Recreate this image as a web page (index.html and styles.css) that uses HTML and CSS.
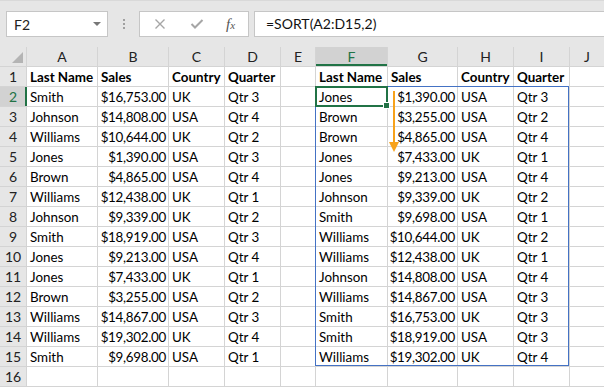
FILE: index.html
```html
<!DOCTYPE html>
<html>
<head>
<meta charset="utf-8">
<link rel="stylesheet" href="styles.css">
</head>
<body>
<div class="toolbar">
  <div class="namebox"><span class="ref">F2</span><span class="dd"></span></div>
  <div class="grip"><i></i><i></i><i></i></div>
  <div class="btnbox">
    <svg class="ico" width="12" height="12" viewBox="0 0 12 12"><path d="M1.5 1.5 L10.5 10.5 M10.5 1.5 L1.5 10.5" stroke="#a6a6a6" stroke-width="1.4" fill="none"/></svg>
    <svg class="ico" width="14" height="12" viewBox="0 0 14 12"><path d="M1.5 6 L5 9.5 L12.5 2" stroke="#a6a6a6" stroke-width="2" fill="none"/></svg>
    <span class="fx">f<sub>x</sub></span>
  </div>
  <div class="formula">=SORT(A2:D15,2)</div>
</div>
<div class="sheet">
  <div class="grid">
    <div class="hd corner"><span class="tri"></span></div>
    <div class="hd">A</div><div class="hd">B</div><div class="hd">C</div><div class="hd">D</div><div class="hd">E</div>
    <div class="hd sel-col">F</div><div class="hd">G</div><div class="hd">H</div><div class="hd">I</div><div class="hd">J</div>

    <div class="rh">1</div><div class="c b">Last Name</div><div class="c b">Sales</div><div class="c b">Country</div><div class="c b">Quarter</div><div class="c"></div><div class="c b">Last Name</div><div class="c b">Sales</div><div class="c b">Country</div><div class="c b">Quarter</div><div class="c"></div>
    <div class="rh sel-row">2</div><div class="c">Smith</div><div class="c n">$16,753.00</div><div class="c">UK</div><div class="c">Qtr 3</div><div class="c"></div><div class="c">Jones</div><div class="c n">$1,390.00</div><div class="c">USA</div><div class="c">Qtr 3</div><div class="c"></div>
    <div class="rh">3</div><div class="c">Johnson</div><div class="c n">$14,808.00</div><div class="c">USA</div><div class="c">Qtr 4</div><div class="c"></div><div class="c">Brown</div><div class="c n">$3,255.00</div><div class="c">USA</div><div class="c">Qtr 2</div><div class="c"></div>
    <div class="rh">4</div><div class="c">Williams</div><div class="c n">$10,644.00</div><div class="c">UK</div><div class="c">Qtr 2</div><div class="c"></div><div class="c">Brown</div><div class="c n">$4,865.00</div><div class="c">USA</div><div class="c">Qtr 4</div><div class="c"></div>
    <div class="rh">5</div><div class="c">Jones</div><div class="c n">$1,390.00</div><div class="c">USA</div><div class="c">Qtr 3</div><div class="c"></div><div class="c">Jones</div><div class="c n">$7,433.00</div><div class="c">UK</div><div class="c">Qtr 1</div><div class="c"></div>
    <div class="rh">6</div><div class="c">Brown</div><div class="c n">$4,865.00</div><div class="c">USA</div><div class="c">Qtr 4</div><div class="c"></div><div class="c">Jones</div><div class="c n">$9,213.00</div><div class="c">USA</div><div class="c">Qtr 4</div><div class="c"></div>
    <div class="rh">7</div><div class="c">Williams</div><div class="c n">$12,438.00</div><div class="c">UK</div><div class="c">Qtr 1</div><div class="c"></div><div class="c">Johnson</div><div class="c n">$9,339.00</div><div class="c">UK</div><div class="c">Qtr 2</div><div class="c"></div>
    <div class="rh">8</div><div class="c">Johnson</div><div class="c n">$9,339.00</div><div class="c">UK</div><div class="c">Qtr 2</div><div class="c"></div><div class="c">Smith</div><div class="c n">$9,698.00</div><div class="c">USA</div><div class="c">Qtr 1</div><div class="c"></div>
    <div class="rh">9</div><div class="c">Smith</div><div class="c n">$18,919.00</div><div class="c">USA</div><div class="c">Qtr 3</div><div class="c"></div><div class="c">Williams</div><div class="c n">$10,644.00</div><div class="c">UK</div><div class="c">Qtr 2</div><div class="c"></div>
    <div class="rh">10</div><div class="c">Jones</div><div class="c n">$9,213.00</div><div class="c">USA</div><div class="c">Qtr 4</div><div class="c"></div><div class="c">Williams</div><div class="c n">$12,438.00</div><div class="c">UK</div><div class="c">Qtr 1</div><div class="c"></div>
    <div class="rh">11</div><div class="c">Jones</div><div class="c n">$7,433.00</div><div class="c">UK</div><div class="c">Qtr 1</div><div class="c"></div><div class="c">Johnson</div><div class="c n">$14,808.00</div><div class="c">USA</div><div class="c">Qtr 4</div><div class="c"></div>
    <div class="rh">12</div><div class="c">Brown</div><div class="c n">$3,255.00</div><div class="c">USA</div><div class="c">Qtr 2</div><div class="c"></div><div class="c">Williams</div><div class="c n">$14,867.00</div><div class="c">USA</div><div class="c">Qtr 3</div><div class="c"></div>
    <div class="rh">13</div><div class="c">Williams</div><div class="c n">$14,867.00</div><div class="c">USA</div><div class="c">Qtr 3</div><div class="c"></div><div class="c">Smith</div><div class="c n">$16,753.00</div><div class="c">UK</div><div class="c">Qtr 3</div><div class="c"></div>
    <div class="rh">14</div><div class="c">Williams</div><div class="c n">$19,302.00</div><div class="c">UK</div><div class="c">Qtr 4</div><div class="c"></div><div class="c">Smith</div><div class="c n">$18,919.00</div><div class="c">USA</div><div class="c">Qtr 3</div><div class="c"></div>
    <div class="rh">15</div><div class="c">Smith</div><div class="c n">$9,698.00</div><div class="c">USA</div><div class="c">Qtr 1</div><div class="c"></div><div class="c">Williams</div><div class="c n">$19,302.00</div><div class="c">UK</div><div class="c">Qtr 4</div><div class="c"></div>
    <div class="rh">16</div><div class="c"></div><div class="c"></div><div class="c"></div><div class="c"></div><div class="c"></div><div class="c"></div><div class="c"></div><div class="c"></div><div class="c"></div><div class="c"></div>
  </div>
  <div class="spill"></div>
  <div class="active"><span class="handle"></span></div>
  <svg class="arrow" width="12" height="62" viewBox="0 0 12 62"><rect x="5" y="0" width="2" height="53" fill="#f7a21b"/><path d="M1 51 L11 51 L6 61 Z" fill="#f7a21b"/></svg>
</div>
</body>
</html>
```

FILE: styles.css
```css
html, body {
  margin: 0;
  padding: 0;
  background: #ffffff;
  width: 604px;
  height: 387px;
  overflow: hidden;
  font-family: Lato, "Liberation Sans", sans-serif;
}

.toolbar {
  height: 47px;
  box-sizing: border-box;
  background: #e6e6e6;
  border-top: 1px solid #d9d9d9;
  padding: 10px 0 0 6px;
  display: flex;
  align-items: flex-start;
}

.namebox {
  width: 102px;
  height: 26px;
  box-sizing: border-box;
  background: #fff;
  border: 1px solid #c6c6c6;
  display: flex;
  align-items: center;
  justify-content: space-between;
  padding: 0 6px 0 7px;
  font-size: 14px;
  color: #222;
}

.dd {
  width: 0;
  height: 0;
  border-left: 4px solid transparent;
  border-right: 4px solid transparent;
  border-top: 4px solid #777;
}

.grip {
  width: 31px;
  height: 26px;
  display: flex;
  flex-direction: column;
  align-items: center;
  justify-content: center;
  gap: 2px;
}
.grip i {
  width: 2px;
  height: 2px;
  background: #a0a0a0;
}

.btnbox {
  width: 110px;
  height: 26px;
  box-sizing: border-box;
  background: #fff;
  border: 1px solid #c6c6c6;
  display: flex;
  align-items: center;
  padding: 0 0 0 14px;
  gap: 0;
}
.btnbox .ico:first-child { margin-right: 24px; }
.btnbox .ico:nth-child(2) { margin-right: 22px; }

.fx {
  font-family: "Liberation Serif", serif;
  font-style: italic;
  font-size: 15px;
  color: #555;
  line-height: 1;
}
.fx sub {
  font-size: 11px;
  vertical-align: 0;
  margin-left: 0;
}

.formula {
  margin-left: 5px;
  flex: 1;
  height: 26px;
  box-sizing: border-box;
  background: #fff;
  border: 1px solid #c6c6c6;
  border-right: none;
  padding: 0 0 0 11px;
  font-size: 14px;
  line-height: 24px;
  color: #111;
}

.sheet {
  position: relative;
}

.grid {
  display: grid;
  grid-template-columns: 26px 70px 70px 55px 55px 34px 71px 69px 55px 55px 34px;
  grid-auto-rows: 19px;
  gap: 1px;
  background: #d4d4d4;
  border-bottom: 1px solid #d4d4d4;
}

.grid > div {
  background: #fff;
  font-size: 13.4px;
  line-height: 20px;
  color: #000;
  white-space: nowrap;
  overflow: hidden;
}

.grid > .hd {
  background: #e6e6e6;
  text-align: center;
  color: #222;
  font-size: 14px;
  line-height: 19px;
}

.grid > .corner {
  position: relative;
}
.tri {
  position: absolute;
  right: 3px;
  bottom: 3px;
  width: 0;
  height: 0;
  border-left: 11px solid transparent;
  border-bottom: 11px solid #b4b4b4;
}

.grid > .sel-col {
  background: #d2d2d2;
  color: #217346;
  box-shadow: inset 0 -2px 0 #217346;
}

.grid > .rh {
  background: #e6e6e6;
  text-align: center;
  color: #222;
  font-size: 14px;
}

.grid > .sel-row {
  background: #d2d2d2;
  color: #217346;
  box-shadow: inset -1px 0 0 #217346, 1px 0 0 #217346;
}

.grid > .c {
  padding: 0 3px;
}
.grid > .b {
  font-weight: bold;
}
.grid > .n {
  text-align: right;
  padding: 0 2px 0 0;
  letter-spacing: -0.3px;
}

.spill {
  position: absolute;
  left: 315px;
  top: 39px;
  width: 254px;
  height: 280px;
  box-sizing: border-box;
  border: 1px solid #4472c4;
}

.active {
  position: absolute;
  left: 315px;
  top: 39px;
  width: 73px;
  height: 21px;
  box-sizing: border-box;
  border: 2px solid #217346;
}
.handle {
  position: absolute;
  right: -4px;
  bottom: -4px;
  width: 5px;
  height: 5px;
  background: #217346;
  border: 1px solid #fff;
}

.arrow {
  position: absolute;
  left: 388px;
  top: 44px;
}
```
